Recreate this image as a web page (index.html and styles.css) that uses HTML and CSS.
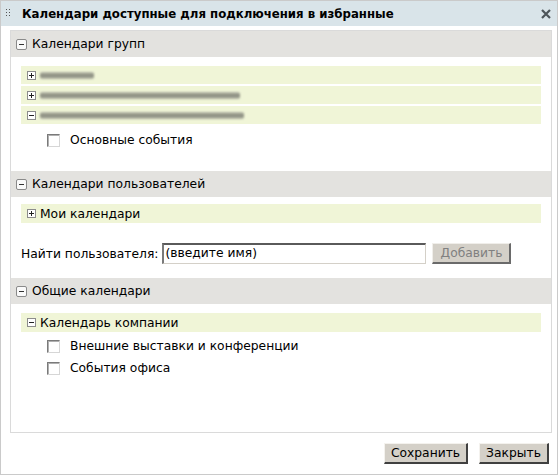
FILE: index.html
```html
<!DOCTYPE html>
<html lang="ru">
<head>
<meta charset="utf-8">
<title>Календари</title>
<link rel="stylesheet" href="styles.css">
</head>
<body>
<div class="window">
  <div class="titlebar">
    <svg class="grip" width="5" height="9" viewBox="0 0 5 9"><g fill="#555"><rect x="0" y="0" width="1" height="1"/><rect x="3" y="0" width="1" height="1"/><rect x="0" y="3" width="1" height="1"/><rect x="3" y="3" width="1" height="1"/><rect x="0" y="6" width="1" height="1"/><rect x="3" y="6" width="1" height="1"/></g></svg>
    <div class="title">Календари доступные для подключения в избранные</div>
    <svg class="close" width="10" height="10" viewBox="0 0 10 10"><path d="M1 1 L9 9 M9 1 L1 9" stroke="#4d5559" stroke-width="2.2" fill="none"/></svg>
  </div>
  <div class="panel">
    <div class="sec-head"><span class="hicon minus"></span><span>Календари групп</span></div>
    <div class="sec-body s1">
      <div class="trow"><span class="ticon plus"></span><span class="blur w1"></span></div>
      <div class="trow"><span class="ticon plus"></span><span class="blur w2"></span></div>
      <div class="trow"><span class="ticon minus"></span><span class="blur w3"></span></div>
      <div class="crow"><span class="cb"></span><span>Основные события</span></div>
    </div>
    <div class="sec-head"><span class="hicon minus"></span><span>Календари пользователей</span></div>
    <div class="sec-body s2">
      <div class="trow tall"><span class="ticon plus"></span><span>Мои календари</span></div>
      <div class="find">
        <span>Найти пользователя:</span>
        <div class="input">(введите имя)</div>
        <div class="btn disabled">Добавить</div>
      </div>
    </div>
    <div class="sec-head"><span class="hicon minus"></span><span>Общие календари</span></div>
    <div class="sec-body s3">
      <div class="trow tall"><span class="ticon minus"></span><span>Календарь компании</span></div>
      <div class="crow c1"><span class="cb"></span><span>Внешние выставки и конференции</span></div>
      <div class="crow c2"><span class="cb"></span><span>События офиса</span></div>
    </div>
  </div>
  <div class="footer">
    <div class="btn save">Сохранить</div>
    <div class="btn closebtn">Закрыть</div>
  </div>
</div>
</body>
</html>
```
FILE: styles.css
```css
* { box-sizing: border-box; }
html, body { margin: 0; padding: 0; background: #fff; }
body { font-family: "DejaVu Sans", Verdana, sans-serif; font-size: 12.3px; color: #000; }

.window {
  width: 558px;
  height: 475px;
  border: 1px solid #cacaca;
  display: flex;
  flex-direction: column;
}

.titlebar {
  height: 25px;
  background: #d9e4e9;
  display: flex;
  align-items: center;
  padding-left: 5px;
  padding-right: 6px;
}
.grip { display: block; margin-right: 11px; }
.title { flex: 1; font-weight: bold; font-size: 11.75px; }
.close { display: block; }

.panel {
  margin: 4px 5px 0 9px;
  height: 403px;
  border: 1px solid #dadada;
}

.sec-head {
  height: 26px;
  background: #e3e2df;
  display: flex;
  align-items: center;
  padding-left: 5px;
}
.hicon {
  width: 11px; height: 11px;
  border: 1px solid #8a8a8a;
  border-radius: 2px;
  background: #fafafa;
  margin-right: 5px;
  position: relative;
}
.hicon::before {
  content: "";
  position: absolute;
  left: 2px; top: 4px;
  width: 5px; height: 1px;
  background: #333;
}

.sec-body { padding: 0 10px; }
.s1 { padding-top: 9px; height: 114px; }
.s2 { padding-top: 7px; height: 81px; }
.s3 { padding-top: 9px; }

.trow {
  height: 18px;
  background: #f0f5d7;
  margin-bottom: 2px;
  display: flex;
  align-items: center;
  padding-left: 6px;
}
.trow.tall { height: 19px; }
.ticon {
  width: 9px; height: 9px;
  border: 1px solid #8c8c8c;
  background: #fff;
  position: relative;
  margin-right: 4px;
  flex: none;
}
.ticon::before {
  content: "";
  position: absolute;
  left: 1px; top: 3px;
  width: 5px; height: 1px;
  background: #222;
}
.ticon.plus::after {
  content: "";
  position: absolute;
  left: 3px; top: 1px;
  width: 1px; height: 5px;
  background: #222;
}
.blur {
  height: 7px;
  background: linear-gradient(180deg, #b8baac, #7d7f73 50%, #b4b6a8);
  filter: blur(1.1px);
  border-radius: 2px;
  opacity: 0.9;
}
.w1 { width: 54px; }
.w2 { width: 200px; }
.w3 { width: 204px; }

.crow {
  display: flex;
  align-items: center;
  height: 16px;
  padding-left: 26px;
}
.s1 .crow { margin-top: 8px; }
.c1 { margin-top: 6px; }
.c2 { margin-top: 6px; }
.cb {
  width: 13px; height: 13px;
  border: 1px solid;
  border-color: #7a7a7a #d6d6d6 #d6d6d6 #7a7a7a;
  box-shadow: inset 1px 1px 0 #b0b0b0;
  background: #fff;
  margin-right: 10px;
  flex: none;
}

.find {
  display: flex;
  align-items: center;
  margin-top: 20px;
}
.input {
  width: 264px;
  height: 21px;
  margin-left: 4px;
  border-style: solid;
  border-width: 2px 1px 1px 2px;
  border-color: #5a5a5a #d4d0c8 #d4d0c8 #7a7a7a;
  padding-left: 1px;
  line-height: 17px;
}
.btn {
  height: 21px;
  background: #d4d0c8;
  border-style: solid;
  border-width: 1px 2px 2px 1px;
  border-color: #f4f2ee #404040 #404040 #f4f2ee;
  display: flex;
  align-items: center;
  justify-content: center;
  font-size: 12.3px;
}
.btn.disabled {
  width: 79px;
  margin-left: 6px;
  color: #808080;
  border-color: #f0eeea #6a6a6a #6a6a6a #f0eeea;
}

.footer {
  display: flex;
  justify-content: flex-end;
  gap: 11px;
  padding: 10px 8px 0 0;
}
.save { width: 84px; }
.closebtn { width: 70px; }
```
